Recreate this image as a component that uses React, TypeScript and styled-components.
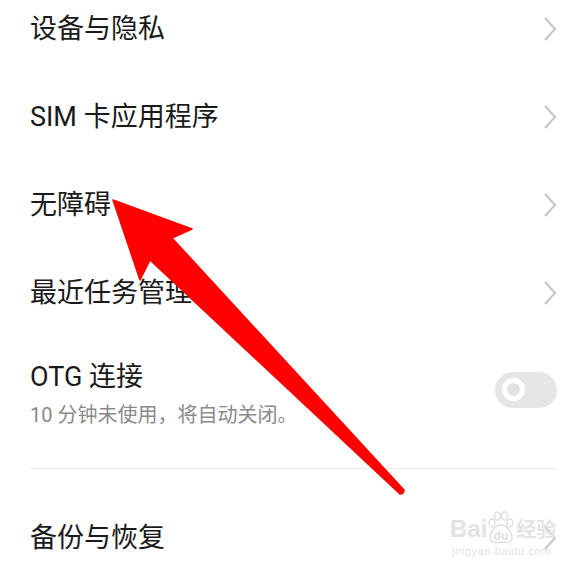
import styled, { createGlobalStyle } from "styled-components";

const GlobalStyle = createGlobalStyle`
    body {
        margin: 0;
        background: #ffffff;
        font-family: Roboto, "Noto Sans CJK SC", sans-serif;
    }
`;

const Screen = styled.div`
    position: relative;
    width: 588px;
    height: 578px;
    overflow: hidden;
    background: #ffffff;
`;
const List = styled.div`
    margin-top: -15px;
    display: flex;
    flex-direction: column;
`;
const Row = styled.div<{ $tall?: boolean }>`
    display: flex;
    align-items: center;
    justify-content: space-between;
    height: ${(props) => (props.$tall ? "auto" : "88px")};
    padding: ${(props) => (props.$tall ? "21px 31px 18px 30px" : "0 31px 0 30px")};
`;
const TextBlock = styled.div`
    display: flex;
    flex-direction: column;
    gap: 5px;
`;
const Title = styled.span`
    font-size: 27px;
    line-height: 38px;
    color: #1a1a1a;
`;
const Sub = styled.span`
    font-size: 20px;
    line-height: 28px;
    color: #8a8a8a;
`;
const Divider = styled.div`
    height: 1px;
    background: #ececec;
    margin: 21px 31px 25px 30px;
`;
const Toggle = styled.div`
    width: 62px;
    height: 36px;
    border-radius: 18px;
    background: #e6e6e6;
    display: flex;
    align-items: center;
    padding-left: 7px;
    margin-bottom: 8px;
    box-sizing: border-box;
`;
const Knob = styled.div`
    width: 23px;
    height: 23px;
    border-radius: 50%;
    border: 5px solid #ffffff;
    background: #e2e2e2;
    box-sizing: border-box;
`;
const ArrowLayer = styled.svg`
    position: absolute;
    left: 0;
    top: 0;
    pointer-events: none;
`;
const Watermark = styled.div`
    position: absolute;
    left: 450px;
    top: 510px;
    display: flex;
    flex-direction: column;
    align-items: flex-start;
    color: #e3e3e3;
    font-family: "Liberation Sans", "Noto Sans CJK SC", sans-serif;
`;
const MarkRow = styled.div`
    display: flex;
    align-items: flex-end;
    font-size: 24px;
    font-weight: bold;
    line-height: 30px;
`;
const MarkCn = styled.span`
    font-size: 20px;
    line-height: 28px;
    margin-left: 1px;
`;
const MarkUrl = styled.span`
    font-size: 11px;
    line-height: 14px;
    letter-spacing: 0.6px;
    margin-left: 2px;
`;

function Chevron() {
    return (
        <svg width="14" height="26" viewBox="0 0 14 26">
            <polyline points="2,2 12,13 2,24" fill="none" stroke="#c6c6c6" strokeWidth="2" />
        </svg>
    );
}

function Paw() {
    return (
        <svg width="28" height="34" viewBox="0 0 28 34">
            <g fill="none" stroke="#dedede" strokeWidth="1.4">
                <ellipse cx="5" cy="13" rx="3" ry="4" />
                <ellipse cx="10.5" cy="6" rx="3" ry="4" />
                <ellipse cx="17.5" cy="6" rx="3" ry="4" />
                <ellipse cx="23" cy="13" rx="3" ry="4" />
                <path d="M14 15 C8 15 3 22 3 28 C3 33 8 33 14 32 C20 33 25 33 25 28 C25 22 20 15 14 15 Z" />
            </g>
            <text x="14" y="30" textAnchor="middle" fontSize="12" fontWeight="bold" fill="#dedede" fontFamily="Liberation Sans, sans-serif">du</text>
        </svg>
    );
}

const items = ["设备与隐私", "SIM 卡应用程序", "无障碍", "最近任务管理"];

export default function App() {
    return (
        <Screen>
            <GlobalStyle />
            <List>
                {items.map((label) => (
                    <Row key={label}>
                        <Title>{label}</Title>
                        <Chevron />
                    </Row>
                ))}
                <Row $tall>
                    <TextBlock>
                        <Title>OTG 连接</Title>
                        <Sub>10 分钟未使用，将自动关闭。</Sub>
                    </TextBlock>
                    <Toggle>
                        <Knob />
                    </Toggle>
                </Row>
                <Divider />
                <Row>
                    <Title>备份与恢复</Title>
                    <Chevron />
                </Row>
            </List>
            <ArrowLayer width="588" height="578" viewBox="0 0 588 578">
                <path
                    d="M113 200 L192 229 L172 238 L404 490 Q404 494 400 494 L150 260 L140 280 Z"
                    fill="#fe0000"
                    stroke="#fe0000"
                    strokeWidth="1.5"
                    strokeLinejoin="round"
                />
            </ArrowLayer>
            <Watermark>
                <MarkRow>
                    <span>Bai</span>
                    <Paw />
                    <MarkCn>经验</MarkCn>
                </MarkRow>
                <MarkUrl>jingyan.baidu.com</MarkUrl>
            </Watermark>
        </Screen>
    );
}
